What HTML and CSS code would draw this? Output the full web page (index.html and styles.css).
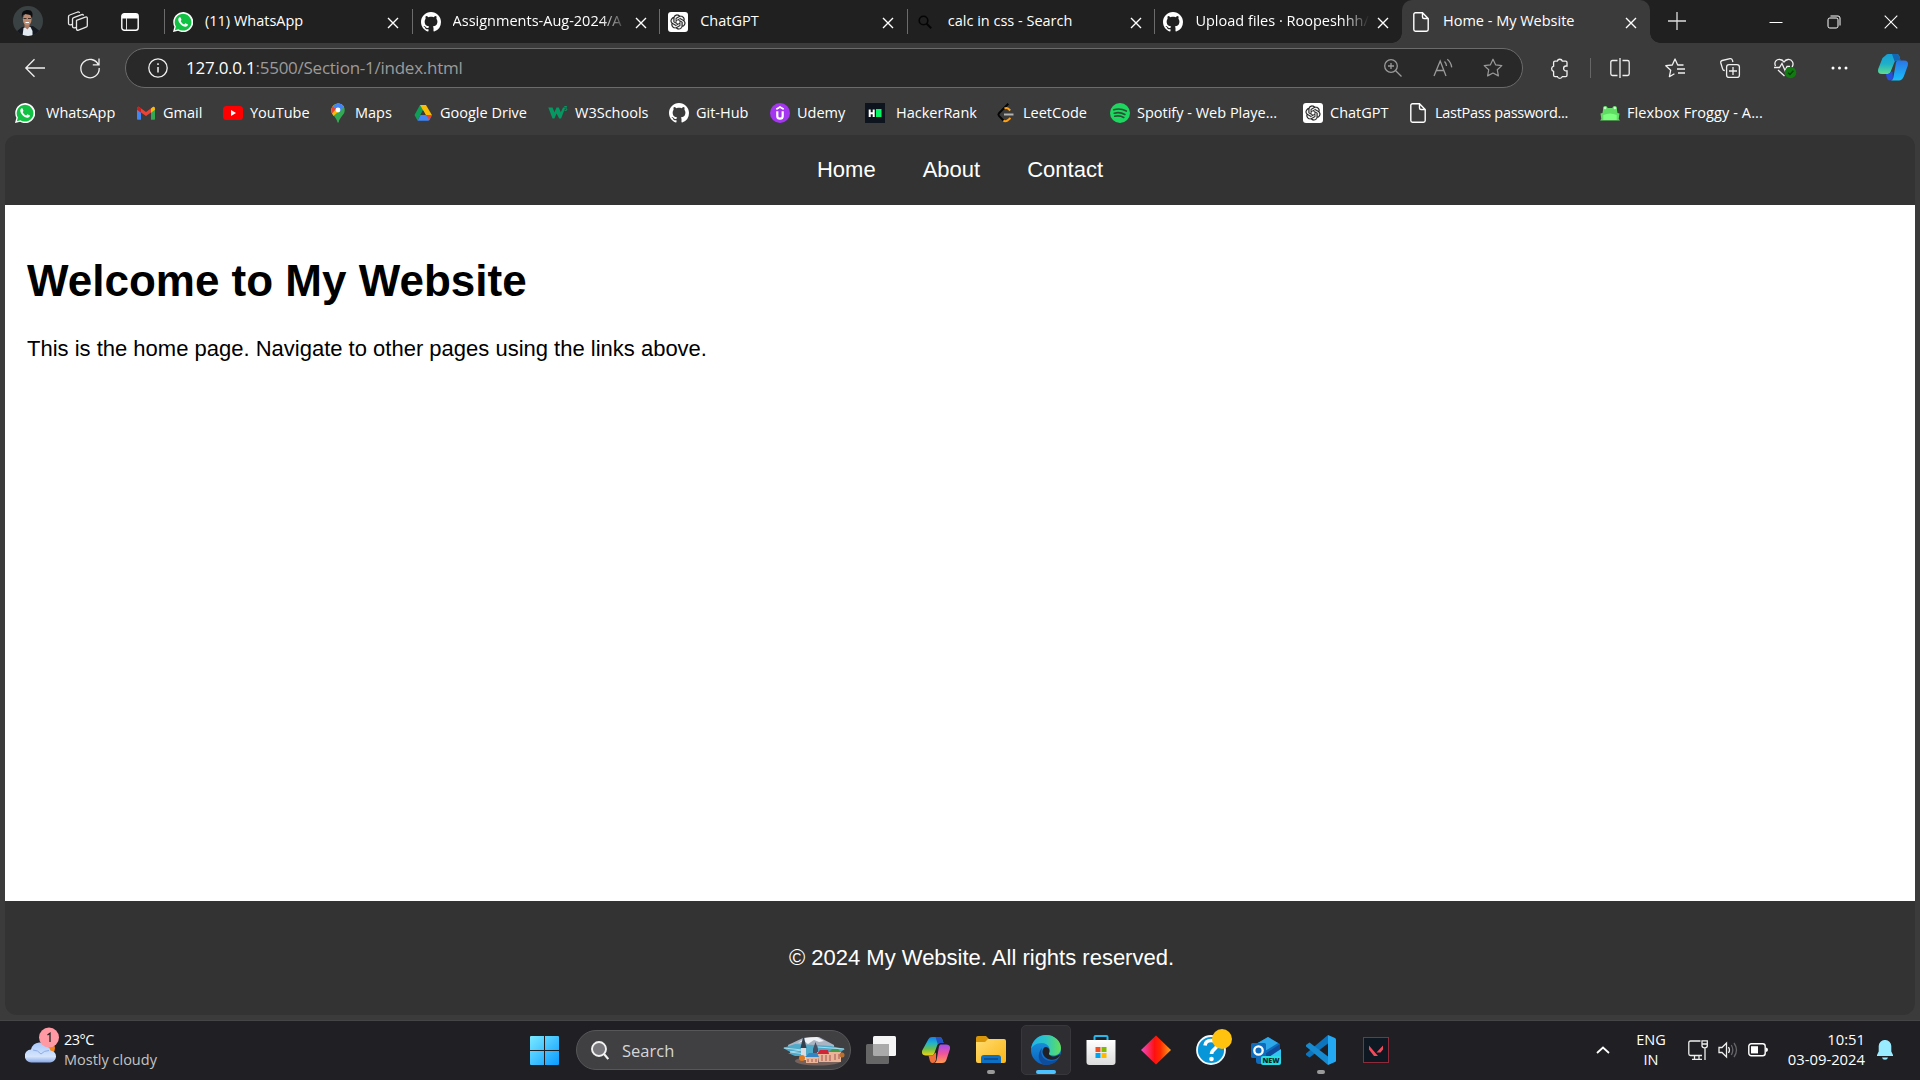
FILE: index.html
```html
<!DOCTYPE html>
<html lang="en">
<head>
<meta charset="utf-8">
<title>Home - My Website</title>
<link rel="stylesheet" href="styles.css">
</head>
<body>
<svg width="0" height="0" class="sprite" aria-hidden="true">
  <defs>
    <linearGradient id="g-win" x1="0" y1="0" x2="1" y2="1"><stop offset="0" stop-color="#7beaff"/><stop offset="1" stop-color="#0a9bff"/></linearGradient>
    <linearGradient id="g-folder" x1="0" y1="0" x2="1" y2="1"><stop offset="0" stop-color="#ffdc70"/><stop offset="1" stop-color="#fbb616"/></linearGradient>
    <linearGradient id="g-dia"><stop offset="0" stop-color="#f04cc8"/><stop offset=".45" stop-color="#ff1010"/><stop offset=".65" stop-color="#ff2b00"/><stop offset="1" stop-color="#ffa51e"/></linearGradient>
    <linearGradient id="g-edge1"><stop offset="0" stop-color="#1fb6ea"/><stop offset=".5" stop-color="#2cc5c4"/><stop offset="1" stop-color="#62e05a"/></linearGradient>
    <linearGradient id="g-edge2" x1="0" y1="0" x2="0" y2="1"><stop offset="0" stop-color="#1b9de2"/><stop offset="1" stop-color="#0b60bd"/></linearGradient>
    <linearGradient id="g-cp1" x1="0" y1="0" x2="0" y2="1"><stop offset="0" stop-color="#1580ee"/><stop offset=".35" stop-color="#24b5c9"/><stop offset=".65" stop-color="#6cc04a"/><stop offset="1" stop-color="#f2d313"/></linearGradient>
    <linearGradient id="g-cp2" x1="0" y1="0" x2="0" y2="1"><stop offset="0" stop-color="#a04df2"/><stop offset=".5" stop-color="#f0549c"/><stop offset="1" stop-color="#ff9a4b"/></linearGradient>
    <linearGradient id="g-ecp1" x1="0" y1="0" x2="0" y2="1"><stop offset="0" stop-color="#15a0d8"/><stop offset=".5" stop-color="#1fb0c8"/><stop offset="1" stop-color="#5edc8c"/></linearGradient>
    <linearGradient id="g-ecp2" x1="0" y1="0" x2="0" y2="1"><stop offset="0" stop-color="#2b74e8"/><stop offset="1" stop-color="#18c0f8"/></linearGradient>
    <linearGradient id="g-cloud" x1="0" y1="0" x2="0" y2="1"><stop offset="0" stop-color="#a9c9fb"/><stop offset=".7" stop-color="#d5e4fb"/><stop offset="1" stop-color="#86a8e8"/></linearGradient>
    <linearGradient id="g-store" x1="0" y1="0" x2="0" y2="1"><stop offset="0" stop-color="#fff"/><stop offset="1" stop-color="#dcdcdc"/></linearGradient>
    <symbol id="close" viewBox="0 0 12 12"><path d="M1 1l10 10M11 1L1 11" stroke="#fff" stroke-width="1.4"/></symbol>
    <symbol id="whatsapp" viewBox="0 0 20 20"><path d="M0 20l1.4-5.2A10 10 0 1 1 5.100 18.700z" fill="#fff"/><path d="M1.900 18.200l1-3.600A8.400 8.400 0 1 1 5.400 17.200z" fill="#12c143"/><path d="M6.800 5.200c-.8.200-1.500 1-1.500 2.200 0 3.100 3.800 7 7 7.300 1.400.1 2.500-.7 2.700-2.100l-2.600-1.300-1.200 1.200c-1.800-.7-2.900-1.900-3.600-3.500l.9-1.100-.9-2.500z" fill="#fff"/></symbol>
    <symbol id="github" viewBox="0 0 16 16"><path fill="#fff" d="M8 0C3.580 0 0 3.580 0 8c0 3.540 2.290 6.530 5.470 7.590.4.070.55-.17.55-.38 0-.19-.01-.82-.01-1.490-2.010.37-2.530-.49-2.690-.94-.09-.23-.48-.94-.82-1.130-.28-.15-.68-.52-.01-.53.63-.01 1.080.58 1.230.82.72 1.210 1.870.87 2.330.66.070-.52.28-.87.510-1.070-1.780-.2-3.640-.89-3.640-3.950 0-.87.310-1.590.82-2.150-.08-.2-.36-1.020.08-2.120 0 0 .67-.21 2.200.82.64-.18 1.320-.27 2-.27s1.360.09 2 .27c1.530-1.040 2.200-.82 2.200-.82.44 1.100.16 1.920.08 2.120.51.56.82 1.270.82 2.150 0 3.070-1.870 3.750-3.650 3.950.29.25.54.73.54 1.480 0 1.070-.01 1.930-.01 2.200 0 .21.150.46.55.38A8.010 8.010 0 0 0 16 8c0-4.420-3.580-8-8-8z"/></symbol>
    <symbol id="gpt" viewBox="0 0 20 20"><rect width="20" height="20" rx="3" fill="#fff"/><path transform="translate(2.500 2.500) scale(.625)" fill="#1c1c1c" stroke="#1c1c1c" stroke-width=".3" d="M22.2819 9.8211a5.9847 5.9847 0 0 0-.5157-4.9108 6.0462 6.0462 0 0 0-6.5098-2.9A6.0651 6.0651 0 0 0 4.9807 4.1818a5.9847 5.9847 0 0 0-3.9977 2.9 6.0462 6.0462 0 0 0 .7427 7.0966 5.98 5.98 0 0 0 .511 4.9107 6.051 6.051 0 0 0 6.5146 2.9001A5.9847 5.9847 0 0 0 13.2599 24a6.0557 6.0557 0 0 0 5.7718-4.2058 5.9894 5.9894 0 0 0 3.9977-2.9001 6.0557 6.0557 0 0 0-.7475-7.0729zm-9.022 12.6081a4.4755 4.4755 0 0 1-2.8764-1.0408l.1419-.0804 4.7783-2.7582a.7948.7948 0 0 0 .3927-.6813v-6.7369l2.02 1.1686a.071.071 0 0 1 .038.052v5.5826a4.504 4.504 0 0 1-4.4945 4.4944zm-9.6607-4.1254a4.4708 4.4708 0 0 1-.5346-3.0137l.142.0852 4.783 2.7582a.7712.7712 0 0 0 .7806 0l5.8428-3.3685v2.3324a.0804.0804 0 0 1-.0332.0615L9.74 19.9502a4.4992 4.4992 0 0 1-6.1408-1.6464zM2.3408 7.8956a4.485 4.485 0 0 1 2.3655-1.9728V11.6a.7664.7664 0 0 0 .3879.6765l5.8144 3.3543-2.0201 1.1685a.0757.0757 0 0 1-.071 0l-4.8303-2.7865A4.504 4.504 0 0 1 2.3408 7.872zm16.5963 3.8558L13.1038 8.364 15.1192 7.2a.0757.0757 0 0 1 .071 0l4.8303 2.7913a4.4944 4.4944 0 0 1-.6765 8.1042v-5.6772a.79.79 0 0 0-.407-.667zm2.0107-3.0231l-.142-.0852-4.7735-2.7818a.7759.7759 0 0 0-.7854 0L9.409 9.2297V6.8974a.0662.0662 0 0 1 .0284-.0615l4.8303-2.7866a4.4992 4.4992 0 0 1 6.6802 4.66zM8.3065 12.863l-2.02-1.1638a.0804.0804 0 0 1-.038-.0567V6.0742a4.4992 4.4992 0 0 1 7.3757-3.4537l-.142.0805L8.704 5.459a.7948.7948 0 0 0-.3927.6813zm1.0976-2.3654l2.602-1.4998 2.6069 1.4998v2.9994l-2.5974 1.4997-2.6067-1.4997z"/></symbol>
    <symbol id="file" viewBox="0 0 16 20"><path d="M2.500 .8h7L15.200 6.500v11a1.700 1.700 0 0 1-1.700 1.700h-11A1.700 1.700 0 0 1 .8 17.500v-15A1.700 1.700 0 0 1 2.500 .8zM9.500 .8v4.200a1.500 1.500 0 0 0 1.500 1.500h4.200" fill="none" stroke="#fff" stroke-width="1.400"/></symbol>
    <symbol id="star" viewBox="0 0 20 20"><path d="M10 1.200l2.600 5.600 6.200.8-4.500 4.200 1.100 6.100L10 15l-5.400 2.900 1.100-6.100L1.200 7.600l6.200-.8z" fill="none" stroke="currentColor" stroke-width="1.200" stroke-linejoin="round"/></symbol>
  </defs>
</svg>

<header class="tabstrip">
  <div class="profile">
    <svg width="30" height="30" viewBox="0 0 30 30"><defs><clipPath id="face"><circle cx="15" cy="15" r="15"/></clipPath></defs><g clip-path="url(#face)"><rect width="30" height="30" fill="#3b4244"/><path d="M3 30v-4l6-5 11-1 8 6v4z" fill="#151a22"/><path d="M9.500 30l1-8 2-1h5l2 4v5z" fill="#e3eaf2"/><path d="M11.500 16h5v5l-2 2.500-3-2.500z" fill="#a87760"/><ellipse cx="14.200" cy="13.500" rx="4.300" ry="6" fill="#bd8b70"/><path d="M9 12c-1-6 1.500-8 6-8 4 0 5.500 3 4 8l-1.500-3-5.500-1-2 1z" fill="#0c0d10"/><path d="M10.500 12.500h3m1.500 0h3" stroke="#40302a"/><path d="M12.500 16.500h3.500" stroke="#fff"/></g></svg>
  </div>
  <div class="strip-btn spaces"><svg width="22" height="22" viewBox="0 0 22 22" fill="none" stroke="#e8e8e8" stroke-width="1.300" stroke-linejoin="round"><path d="M9.500 9.300l8.800-3.200q2-.6 2 1.200v7.200q0 1.300-1.200 1.700l-7.600 2.900q-2 .6-2-1.200z"/><path d="M9 16.500l-1.500.3q-2 .3-2-1.500V8.300q0-1.300 1.200-1.700l8-3q1.500-.4 1.800 1"/><path d="M5 13.500l-1.500.3q-2 .3-2-1.500V5.700q0-1.300 1.200-1.700l8-3q1.500-.4 1.800 1"/></svg></div>
  <div class="strip-btn"><svg width="18" height="18" viewBox="0 0 18 18"><rect x=".8" y=".8" width="16.400" height="16.400" rx="2.500" fill="none" stroke="#fff" stroke-width="1.400"/><path d="M1 3q0-2 2-2h12q2 0 2 2v2.500H1z" fill="#fff"/><path d="M5.500 5v12" stroke="#ddd"/></svg></div>
  <div class="tab"><svg class="fav"><use href="#whatsapp"/></svg><span class="title">(11) WhatsApp</span><svg class="x"><use href="#close"/></svg></div>
  <div class="tab"><svg class="fav"><use href="#github"/></svg><span class="title fade">Assignments-Aug-2024/A</span><svg class="x"><use href="#close"/></svg></div>
  <div class="tab"><svg class="fav"><use href="#gpt"/></svg><span class="title">ChatGPT</span><svg class="x"><use href="#close"/></svg></div>
  <div class="tab"><svg class="fav" viewBox="0 0 20 20"><circle cx="7.500" cy="8.500" r="4.300" fill="none" stroke="#050505" stroke-width="1.600"/><path d="M10.700 11.700l4.500 4.500" stroke="#050505" stroke-width="2"/></svg><span class="title">calc in css - Search</span><svg class="x"><use href="#close"/></svg></div>
  <div class="tab"><svg class="fav"><use href="#github"/></svg><span class="title fade">Upload files · Roopeshhh/</span><svg class="x"><use href="#close"/></svg></div>
  <div class="tab active"><svg class="fav"><use href="#file"/></svg><span class="title">Home - My Website</span><svg class="x"><use href="#close"/></svg></div>
  <div class="newtab"><svg width="18" height="18" viewBox="0 0 18 18"><path d="M9 0v18M0 9h18" stroke="#ddd" stroke-width="1.300"/></svg></div>
  <div class="window-controls">
    <div><svg width="14" height="14" viewBox="0 0 14 14"><path d="M.5 7.500h13" stroke="#fff"/></svg></div>
    <div><svg width="14" height="14" viewBox="0 0 14 14" fill="none" stroke="#fff"><rect x="1" y="3" width="10" height="10" rx="1.800"/><path d="M3.500 1h7.500q2 0 2 2v7.500"/></svg></div>
    <div><svg width="14" height="14" viewBox="0 0 14 14"><path d="M.7 .7l12.600 12.600M13.300 .7L.7 13.300" stroke="#fff" stroke-width="1.100"/></svg></div>
  </div>
</header>

<div class="toolbar">
  <div class="tool"><svg width="20" height="20" viewBox="0 0 20 20"><path d="M20 10H1M9.500 1.200L.8 10l8.700 8.800"/></svg></div>
  <div class="tool"><svg width="20" height="20" viewBox="0 0 20 20"><path d="M18.500 7A9.200 9.200 0 1 0 19.200 10M19 .5V6.800h-6.200"/></svg></div>
  <div class="address">
    <svg class="info" width="20" height="20" viewBox="0 0 20 20"><circle cx="10" cy="10" r="9.200"/><path d="M10 9v5.500M10 5.200v1.700" stroke-width="1.500"/></svg>
    <div class="url"><span class="host">127.0.0.1</span>:5500/Section-1/index.html</div>
    <div class="addr-btn"><svg width="18" height="18" viewBox="0 0 18 18"><circle cx="7" cy="7" r="6.300"/><path d="M11.700 11.700l5.800 5.800M7 4v6M4 7h6"/></svg></div>
    <div class="addr-btn"><svg width="20" height="20" viewBox="0 0 20 20"><path d="M1 18L7.200 3 13 18M3.200 12.500h7.800M11.500 3.500q2 2 2 4.500M14.300 1.300q3.700 3 4.400 8"/></svg></div>
    <div class="addr-btn"><svg width="20" height="20"><use href="#star"/></svg></div>
  </div>
  <div class="tool first"><svg width="20" height="20" viewBox="0 0 20 20"><path d="M7 3.200h1.200a2.700 2.700 0 0 1 5.200 0h3.200q1.400 0 1.400 1.400V8h-1a2.400 2.400 0 0 0 0 4.800h1v4.400q0 1.400-1.400 1.400h-3.300a2.600 2.600 0 0 1-4.900 0H6q-1.400 0-1.400-1.400v-3.800a2.700 2.700 0 0 1 0-5.200V4.600q0-1.400 1.400-1.400z"/></svg></div>
  <div class="divider"></div>
  <div class="tool"><svg width="20" height="20" viewBox="0 0 20 20"><path d="M7.500 2.500H2.500q-1.700 0-1.700 1.700v11.600q0 1.700 1.700 1.700h5M12.500 2.500h5q1.700 0 1.700 1.700v11.600q0 1.700-1.700 1.700h-5M10 0v20"/></svg></div>
  <div class="tool"><svg width="20" height="20" viewBox="0 0 20 20"><path d="M18.500 7H12.700L10 1 7.300 7 .8 7.700l4.900 4.500-1.300 6.500 5-3M12 11h8M13 15h7" stroke-linejoin="round"/></svg></div>
  <div class="tool"><svg width="20" height="20" viewBox="0 0 20 20"><rect x="6.600" y="6.600" width="12.800" height="12.800" rx="2.500"/><path d="M13 9v8M9 13h8M4.800 12.500q-1.800 0-2.200-1.700L.8 5q-.4-2 1.400-2.500L10 .6q1.800-.3 2.400 1.500l.5 1.900"/></svg></div>
  <div class="tool"><svg width="22" height="20" viewBox="0 0 22 20"><path d="M1.500 8C-.5 3.500 3 1 6 1.500q2.500.3 4 2.500 1.500-2.200 4-2.500c4-.5 6.500 4 4 7.500M0 9.500h5.500L8 5.500l3 7 2-4h3M4 12l6.500 6"/><circle cx="16.500" cy="14.500" r="5.700" fill="#107c10" stroke="none"/><path d="M14 14.700l1.900 1.800 3.500-3.700" stroke="#073d09"/></svg></div>
  <div class="tool"><svg width="17" height="4" viewBox="0 0 17 4" class="dots"><circle cx="2" cy="2" r="1.500"/><circle cx="8.500" cy="2" r="1.500"/><circle cx="15" cy="2" r="1.500"/></svg></div>
  <div class="tool copilot"><svg width="30" height="27" viewBox="0 0 30 27"><path d="M7.500 1.500Q8.300 0 10 0h8.500q2 0 2.800 2.200l1.200 4.300H19q-2 0-2.700 2L12.500 18q-.8 2-3 2H4q-5 0-3.800-5L4.500 4z" fill="url(#g-ecp1)"/><path d="M14 0h4.500q2 0 2.800 2.200l1.200 4.300H19q-1.500 0-2.300 1.200z" fill="#1266b4"/><path d="M19.500 6.500H26q5 0 3.800 5l-4 11Q24 26.500 21 26.500h-8q1.700-.7 2.300-2.500L18 8.500q.5-1.500 1.500-2z" fill="url(#g-ecp2)"/><path d="M8 20h2q2 0 2.700-2l1.800-.5.500 7q-1 2-3 2-2.500 0-3.200-2.500z" fill="#254fdd"/></svg></div>
</div>

<nav class="bookmarks">
  <a><svg class="bi"><use href="#whatsapp"/></svg><span class="wide">WhatsApp</span></a>
  <a><svg class="bi" viewBox="0 0 20 20"><path d="M1 5v11.500h4V9.500L10 13l5-3.500v7h4V5l-1.500-1.500L10 9 2.500 3.500z" fill="#ea4335"/><path d="M1 6v9.500q0 1 1 1h3V9z" fill="#4285f4"/><path d="M15 9v7.500h3q1 0 1-1V6z" fill="#34a853"/><path d="M15 5.400l1.500-1.200Q19 3 19 6v.8l-4 3z" fill="#fbbc04"/><path d="M1 6.800V6q0-3 2.500-1.800L5 5.400v4.400z" fill="#c5221f"/></svg><span>Gmail</span></a>
  <a><svg class="bi" viewBox="0 0 20 20"><rect y="3" width="20" height="14" rx="3.500" fill="#f00"/><path d="M8 7l5 3-5 3z" fill="#fff"/></svg><span>YouTube</span></a>
  <a><svg class="bi" viewBox="0 0 20 20"><path d="M10 .5a6.500 6.500 0 0 1 6.700 6.700c0 5-5.200 6.500-6 12.300H9.500C8.600 13.700 3.300 12.200 3.300 7.200A6.500 6.500 0 0 1 10 .5z" fill="#34a853"/><path d="M5 3Q7 .5 10 .5q4 0 5.900 3.300L5.500 13Q3.300 10.500 3.300 7.200 3.300 5 5 3z" fill="#fbbc04"/><path d="M5 3l3 3-4 4.500Q2.500 6 5 3z" fill="#ea4335"/><path d="M5 3Q7 .5 10 .5q4 0 5.900 3.300l-4 4.500L7 5.500z" fill="#4285f4"/><circle cx="10" cy="7" r="2.400" fill="#fff"/></svg><span>Maps</span></a>
  <a><svg class="bi" viewBox="0 0 20 20"><path d="M7 2h6l-3 5.200-5.500 10.300L1.500 12z" fill="#0f9d58"/><path d="M7 2h6l6 10.200h-6z" fill="#fbbc04"/><path d="M4.500 17.800L7.500 12H19l-2.500 5q-.5.800-1.500.8z" fill="#4285f4"/><path d="M13 12h6l-2.800 5z" fill="#ea4335"/><path d="M10 7.500L7.500 12h5z" fill="#3b3b3b"/></svg><span>Google Drive</span></a>
  <a><svg class="bi" viewBox="0 0 20 20"><path d="M.3 4.500h4.200l2 4.700L8.500 4.500h2.300l2 4.700 2.200-4.700h2.300l-4.200 11h-1.900L8.600 10.500l-2.200 5H4.500z" fill="#059862"/><path d="M16.300 3.500h2.400l-1.200 1.800q1.800.2 1.300 1.700-.6 1-2.300.4" stroke="#059862" fill="none"/></svg><span>W3Schools</span></a>
  <a><svg class="bi"><use href="#github"/></svg><span>Git-Hub</span></a>
  <a><svg class="bi" viewBox="0 0 20 20"><circle cx="10" cy="10" r="10" fill="#a435f0"/><path d="M6.300 6.200L10 4l3.700 2.200" stroke="#fff" stroke-width="1.600" fill="none"/><path d="M7.300 8.200v5q0 2.500 2.700 2.500t2.700-2.500v-5" stroke="#fff" stroke-width="2.200" fill="none"/></svg><span>Udemy</span></a>
  <a><svg class="bi" viewBox="0 0 20 20"><rect width="20" height="20" fill="#0e141e"/><path d="M4.700 6.500v7.500M8.700 6.500v7.500M4.700 10.200h4" stroke="#fff" stroke-width="2"/><path d="M11 6h5.500v8H11z" fill="#05f567"/></svg><span class="wide">HackerRank</span></a>
  <a><svg class="bi" viewBox="0 0 20 20"><path d="M12.300 .8L3 10.300q-1.200 1.300 0 2.600L7.500 17.500" stroke="#050505" stroke-width="2" fill="none"/><path d="M8.500 5.500q2.500-1.500 4.700 1l1 1M7.500 17.500q1.500 1.300 4 0l3-2.500" stroke="#ffa116" stroke-width="2" fill="none"/><path d="M8 11.500h9.500" stroke="#b3b3b3" stroke-width="2"/></svg><span>LeetCode</span></a>
  <a><svg class="bi" viewBox="0 0 20 20"><circle cx="10" cy="10" r="10" fill="#1ed760"/><path d="M3.800 6.700q6.500-1.900 12.500 1.400M4.300 10.200q5.600-1.500 10.600 1.300M4.800 13.200q4.700-1.200 9 1.200" stroke="#2b5135" stroke-width="1.700" fill="none" stroke-linecap="round"/></svg><span>Spotify - Web Playe...</span></a>
  <a><svg class="bi"><use href="#gpt"/></svg><span>ChatGPT</span></a>
  <a><svg class="bi"><use href="#file"/></svg><span class="tight">LastPass password...</span></a>
  <a><svg class="bi" viewBox="0 0 20 20"><path d="M3 7q-.5-4 2.300-4 2 0 2.400 2h4.600q.4-2 2.400-2Q17.500 3 17 7l.5 3 2 .5-.8 5.500 1.300 1.500H0L1.300 16 .5 10.500l2-.5z" fill="#60dc65"/><path d="M3.300 12q6.700-3 13.400 0v5H3.300z" fill="#7cff7f"/><circle cx="5.200" cy="5" r="1.200" fill="#d8ffd8"/><circle cx="14.800" cy="5" r="1.200" fill="#d8ffd8"/></svg><span class="airy">Flexbox Froggy - A...</span></a>
</nav>

<main class="viewport">
  <nav class="site-nav"><a>Home</a><a>About</a><a>Contact</a></nav>
  <section class="content">
    <h1>Welcome to My Website</h1>
    <p>This is the home page. Navigate to other pages using the links above.</p>
  </section>
  <footer class="site-footer"><p>© 2024 My Website. All rights reserved.</p></footer>
</main>

<footer class="taskbar">
  <div class="weather">
    <svg width="36" height="38" viewBox="0 0 36 38"><circle cx="23" cy="21" r="7" fill="#f58418"/><path d="M6.500 35.500a6.500 6.500 0 0 1-.5-13A9.500 9.500 0 0 1 23.500 20.500q1 0 2 3a6 6 0 0 1-1 12z" fill="url(#g-cloud)"/><path d="M8 23q5 0 8 4 3-3.500 8-3.500" stroke="#7f9fe0" stroke-width=".8" fill="none"/><circle cx="24" cy="10.500" r="10" fill="#ff99a4"/><path d="M22.500 8l2.500-1.800V15" stroke="#222" stroke-width="1.300" fill="none"/></svg>
    <div class="weather-text"><span class="temp">23°C</span><span class="sky">Mostly cloudy</span></div>
  </div>
  <div class="start"><svg width="29" height="29" viewBox="0 0 29 29"><path fill="url(#g-win)" d="M1 0h13v14H0V1q0-1 1-1zM15 0h13q1 0 1 1v13H15zM0 15h14v14H1q-1 0-1-1zM15 15h14v13q0 1-1 1H15z"/></svg></div>
  <div class="search">
    <svg width="18" height="19" viewBox="0 0 18 19"><circle cx="8" cy="8" r="7" fill="#77777c" stroke="#f2f2f2" stroke-width="1.900"/><path d="M13 13l4.300 5" stroke="#f2f2f2" stroke-width="2.200"/></svg>
    <span>Search</span>
    <svg width="62" height="31" viewBox="0 0 62 31"><path d="M5 10L20 3l8-1 8 0 15 8v5H6z" fill="#aab4c2"/><path d="M15 8l7-5 12-1 7 4-5 1-5-2-6 4-4-3z" fill="#eef1f6"/><path d="M0 13l12-4 20 1 16 1 14 3-3 2-5 5H12L5 18h4z" fill="#4fa9c9"/><path d="M1 13l18 2-12 2 16 2M35 12l26 2" fill="none" stroke="#a9dceb"/><ellipse cx="35" cy="26" rx="23" ry="4.500" fill="#76615c"/><path d="M18 13h5v12h-5z" fill="#dbdbe0"/><path d="M17.500 13L20.500 0l3 13z" fill="#35404f"/><path d="M30 14l2.500-7 2.500 7v5h-5z" fill="#435066"/><path d="M23 20h12v8H23zM34 17h24v10H36z" fill="#eab596"/><path d="M22 22l4-4h8l2 4z" fill="#3284c3"/><path d="M34 19l3-4h8l1 4z" fill="#ce2638"/><path d="M46 17l3-3h6l3 3z" fill="#429b49"/><path d="M25 24v3M29 24v3M33 24v3M39 20v6M43 20v6M47 20v6M52 19v6M56 19v5" stroke="#a65258"/><circle cx="19" cy="23" r="3" fill="#dc7b22"/><circle cx="59" cy="20" r="2.500" fill="#b9702f"/></svg>
  </div>
  <div class="app"><svg width="30" height="28" viewBox="0 0 30 28"><rect x="7" width="23" height="20" rx="1.500" fill="#f5f5f5"/><rect y="8" width="23" height="20" rx="1.500" fill="#666"/><path d="M7 8h16v12H8.500Q7 20 7 18.500z" fill="#aaa"/></svg></div>
  <div class="app"><svg width="28" height="26" viewBox="0 0 28 26"><path d="M6.500 2Q7.500 0 10 0h7.500q2 0 2.700 2.200L21.500 6H18q-2 0-2.700 2l-3 8.500q-.8 2-3 2H4q-5 0-3.800-5z" fill="url(#g-cp1)"/><path d="M13.500 0h4q2 0 2.700 2.200L21.500 6H18q-1.500 0-2.200 1.200z" fill="#2453c8"/><path d="M18.500 7.500H24q5 0 3.800 5l-3.300 10q-1 3.500-4.500 3.500h-8q2-.5 2.500-2.500L17 9.500q.5-1.500 1.500-2z" fill="url(#g-cp2)"/><path d="M6.500 18.500h3q2 0 3-2l1.500-1v7q-.7 3.500-3.500 3.500-2 0-2.600-2.300z" fill="#f0703c"/></svg></div>
  <div class="app run"><svg width="30" height="28" viewBox="0 0 30 28"><path d="M0 2q0-2 2-2h8l3 3-2 5H0z" fill="#d99509"/><path d="M0 6h9l3-3h16q2 0 2 2v20q0 2-2 2H2q-2 0-2-2z" fill="url(#g-folder)"/><path d="M5 27v-5q0-3 3-3h14q3 0 3 3v5z" fill="#0d70c2"/><path d="M8 23h14" stroke="#08498c" stroke-width="1.500"/></svg></div>
  <div class="app current"><svg width="30" height="30" viewBox="0 0 30 30"><circle cx="15" cy="15" r="15" fill="url(#g-edge2)"/><path d="M0 14.500C1 5 8 0 15 0c9 0 15 6.500 15 13 0 5-3.500 7.500-7.500 7.500-3 0-5-1-4.500-2.300C20 15.500 18.500 8 10.500 8 5 8 1 11 0 14.500z" fill="url(#g-edge1)"/><path d="M11 13c-2.500 7 2 13 9 13 3 0 5.500-.8 7-1.900C24 28.500 20 30 15 30c-7-1-10-10-4-17z" fill="#104c9c"/><path d="M14.500 12c3 0 4.500 2.500 3.800 5-.5 2-.5 2.500.5 3.200 3 2.500 7.700 1 9.700-1.200.5 1 .5 1.500 0 2-2.500 3.500-6 4-8.500 3.700-5.500-.6-8.500-4.500-8.500-7.900 0-2.500 1.200-4.300 3-4.800z" fill="#202026"/></svg></div>
  <div class="app"><svg width="30" height="30" viewBox="0 0 30 30"><path d="M8.500 6V2q0-1 1-1h11q1 0 1 1v4" fill="none" stroke="#29b6ea" stroke-width="2"/><path d="M.5 5h29v22q0 3-3 3h-23q-3 0-3-3z" fill="url(#g-store)"/><path d="M9.500 12h5v5h-5z" fill="#f25022"/><path d="M15.500 12h5v5h-5z" fill="#7fba00"/><path d="M9.500 18h5v5h-5z" fill="#00a4ef"/><path d="M15.500 18h5v5h-5z" fill="#ffb900"/></svg></div>
  <div class="app"><svg width="30" height="30" viewBox="0 0 30 30"><path d="M15 .5L30 15 15 29.500 0 15z" fill="url(#g-dia)"/></svg></div>
  <div class="app"><svg width="30" height="30" viewBox="0 0 30 30" class="spill"><circle cx="15" cy="15" r="14" fill="#0896d8" stroke="#f4fafd" stroke-width="1.800"/><path d="M9 10.500q.5-5 6-5t6 4.500c0 4-5.500 4.200-5.500 9" stroke="#fff" stroke-width="3.600" fill="none"/><circle cx="15.500" cy="24" r="2.300" fill="#fff"/><circle cx="26" cy="4" r="10" fill="#ffc20e"/></svg></div>
  <div class="app"><svg width="30" height="30" viewBox="0 0 30 30"><path d="M5 9L17 2l12 7v17q0 3-3 3H8q-3 0-3-3z" fill="#0f6cbd"/><path d="M5 9L17 2l10 6-13 8H5z" fill="#2ea8e8"/><path d="M14 19L29 9v16H14z" fill="#104a9c"/><path d="M18 22l12-8v14H18z" fill="#34c4f1"/><rect y="8" width="15" height="15" rx="1.500" fill="#0f6cbd"/><circle cx="7.500" cy="15.500" r="4.200" fill="none" stroke="#fff" stroke-width="2.300"/><rect x="10" y="21" width="20" height="9" rx="2" fill="#27dce5"/><text x="20" y="28.300" text-anchor="middle" class="new">NEW</text></svg></div>
  <div class="app run"><svg width="30" height="30" viewBox="0 0 30 30"><path d="M22 0l7 3q1 .5 1 1.500v21q0 1-1 1.500l-7 3z" fill="#24a8f2"/><path d="M22 0v8.500L3.500 22.500 0 20v-1.500z" fill="#0d75bd"/><path d="M3.500 7.500L22 21.500V30L0 11.500V10z" fill="#168bd2"/></svg></div>
  <div class="app"><svg width="26" height="26" viewBox="0 0 26 26"><rect x=".5" y=".5" width="25" height="25" fill="#0d1823" stroke="#8d2b3a"/><path d="M6 8.500l9 10.500h-4L6 12.500zM20 8.500v4l-2.500 3H13.500z" fill="#f24a5b"/></svg></div>
  <div class="tray">
    <svg class="chev" width="14" height="8" viewBox="0 0 14 8"><path d="M1 7l6-5.500L13 7" fill="none" stroke="#fff" stroke-width="1.800"/></svg>
    <div class="lang"><span>ENG</span><span>IN</span></div>
    <svg class="net" width="20" height="20" viewBox="0 0 20 20" fill="none" stroke="#eee" stroke-width="1.300"><path d="M12.500 1H2.500Q.8 1 .8 2.700v11Q.8 15.500 2.500 15.500H14M6.500 16v3M11 16v3M4 19.300h10M17 8v12M14 .8h5.300v5q0 2-2.600 2t-2.700-2zM14 4h5"/></svg>
    <svg class="vol" width="20" height="18" viewBox="0 0 20 18" fill="none" stroke="#eee" stroke-width="1.300"><path d="M1 6.500h3L8.500 2v14L4 11.500H1zM10.500 6q2 3 0 6"/><path d="M13.300 4q3 5 0 10M16 2q5 7 0 14" stroke="#66666a"/></svg>
    <svg class="bat" width="20" height="14" viewBox="0 0 20 14"><rect x=".8" y=".8" width="16.400" height="12" rx="2.500" fill="none" stroke="#fff" stroke-width="1.400"/><path d="M3 3.200h7v7.200H3z" fill="#fff"/><path d="M18 4.500q2 .5 2 2.300t-2 2.300z" fill="#fff"/></svg>
    <div class="clock"><span>10:51</span><span>03-09-2024</span></div>
    <svg class="bell" width="16" height="20" viewBox="0 0 16 20"><path d="M8 0a6 6 0 0 1 6.300 6v5.500L16 15v1H0v-1l1.700-3.500V6A6 6 0 0 1 8 0zM5 17.500h6Q10.500 19.800 8 19.800T5 17.500z" fill="#99ebff"/></svg>
  </div>
</footer>
</body>
</html>
```
FILE: styles.css
```css
* { box-sizing: border-box; }
body {
  margin: 0; width: 1920px; height: 1080px; overflow: hidden;
  display: flex; flex-direction: column;
  background: #3b3b3b; color: #fff;
  font: 14.5px "Open Sans", "Noto Sans", sans-serif;
}
svg { display: block; flex: none; }
.sprite { position: absolute; }
span { white-space: nowrap; }

.tabstrip { display: flex; height: 43px; background: #202020; flex: none; }
.profile { width: 55px; padding: 6px 0 0 13px; }
.strip-btn { width: 53px; display: flex; align-items: center; justify-content: center; }
.strip-btn.spaces { width: 46px; }
.strip-btn + .strip-btn { width: 63px; padding-right: 5px; }
.tab { width: 247.6px; display: flex; align-items: center; padding-left: 8px; position: relative; }
.tab::before { content: ""; width: 1px; height: 25px; background: #6c6c6c; margin-left: -8px; margin-right: 8px; }
.fav { width: 20px; height: 20px; margin-top: 1px; }
.title { width: 176px; margin-left: 12px; line-height: 22px; margin-bottom: 1px; }
.fade {
  -webkit-mask-image: linear-gradient(90deg, #000 84%, transparent 99%);
  mask-image: linear-gradient(90deg, #000 84%, transparent 99%);
}
.x { width: 12px; height: 12px; margin-left: 6px; margin-top: 2px; }
.active { background: #3b3b3b; border-radius: 10px 10px 0 0; }
.active::before { visibility: hidden; }
.active::after {
  content: ""; position: absolute; left: -10px; right: -10px; bottom: 0; height: 10px;
  background: radial-gradient(circle at 0 0, transparent 9.5px, #3b3b3b 10px) left / 10px 10px no-repeat,
              radial-gradient(circle at 100% 0, transparent 9.5px, #3b3b3b 10px) right / 10px 10px no-repeat;
}
.newtab { width: 54px; display: flex; align-items: center; justify-content: center; padding-bottom: 2px; }
.window-controls { margin-left: auto; display: flex; }
.window-controls div { width: 57.5px; display: flex; align-items: center; justify-content: center; }

.toolbar { height: 50px; flex: none; display: flex; align-items: center; padding-left: 7.5px; }
.tool { width: 55px; display: flex; justify-content: center; padding-bottom: 1px; }
.tool svg, .address svg { fill: none; stroke: #f0f0f0; stroke-width: 1.3; overflow: visible; }
.tool .dots { fill: #fff; stroke: none; }
.copilot svg { stroke: none; }
.address {
  width: 1398px; height: 40px; margin-left: 7.5px; padding: 0 4px 0 22px;
  border: 1px solid #6b6b6b; border-radius: 20px; background: #292929;
  display: flex; align-items: center;
}
.url { flex: 1; margin-left: 18px; color: #9b9b9b; font-size: 17px; letter-spacing: -0.25px; line-height: 24px; }
.host { color: #fff; }
.addr-btn { width: 50px; display: flex; justify-content: center; }
.address .addr-btn svg { stroke: #9a9a9a; color: #9a9a9a; }
.first { margin-left: 8.5px; }
.divider { width: 1.5px; height: 20px; background: #666; margin: 0 1px 0 3px; }
.copilot { width: 52px; }

.bookmarks {
  height: 42px; flex: none; padding-left: 15px; padding-bottom: 2px;
  display: grid; align-items: center;
  grid-template-columns: 121px 87px 105px 85px 135px 121px 101px 95px 131px 114px 193px 105px 192px 200px;
}
.bookmarks a { display: flex; align-items: center; gap: 7px; }
.bookmarks span { line-height: 22px; }
.bi { width: 20px; height: 20px; }
.bookmarks .wide { margin-left: 4px; }
.bookmarks .tight { letter-spacing: -0.3px; }
.bookmarks .airy { letter-spacing: 0.1px; }

.viewport {
  height: 880px; flex: none; margin: 0 5px; overflow: hidden; border-radius: 12px;
  display: flex; flex-direction: column;
  background: #333; color: #fff;
  font: 22px "Liberation Sans", Arial, sans-serif;
}
.site-nav { height: 70px; display: flex; justify-content: center; gap: 47px; line-height: 25px; padding-top: 22px; }
.content { flex: 1; padding: 0 22px; background: #fff; color: #000; }
h1 { margin: 51px 0 0; font-size: 44px; line-height: 50px; }
.content p { margin: 30px 0 0; line-height: 25px; }
.site-footer { height: 114px; text-align: center; padding-left: 43px; }
.site-footer p { margin: 44px 0 0; line-height: 25px; }

.taskbar {
  height: 60px; flex: none; margin-top: 5px; padding-bottom: 1px;
  display: flex; align-items: center;
  background: #202024; border-top: 1px solid #454547;
}
.weather { width: 530px; padding-left: 25px; display: flex; gap: 3px; }
.weather > svg { margin-top: -3px; }
.weather-text { display: flex; flex-direction: column; line-height: 20px; }
.temp { letter-spacing: -0.5px; }
.start { width: 46px; }
.sky { color: #c4c4c4; }
.search {
  width: 275px; height: 40px; padding: 0 5px 0 14px; margin-right: 2.5px;
  display: flex; align-items: center;
  border: 1px solid #57575a; border-radius: 20px; background: #404043;
}
.search span { flex: 1; margin-left: 13px; font-size: 16.5px; color: #d6d6d6; }
.app { position: relative; width: 55px; height: 50px; display: flex; align-items: center; justify-content: center; }
.spill { overflow: visible; }
.current::before { content: ""; position: absolute; inset: 0 2.5px; border-radius: 5px; border: 1px solid #38383c; background: #2e2e32; }
.current svg { position: relative; }
.run::after, .current::after { content: ""; position: absolute; bottom: 1px; left: 23.5px; width: 8px; height: 4px; border-radius: 2px; background: #9a9a9a; }
.current::after { left: 17.5px; width: 20px; background: #4cc2ff; }
.new { font: 800 7px "Open Sans", sans-serif; fill: #06262b; }
.tray { margin-left: auto; padding-right: 27px; display: flex; align-items: center; }
.lang { width: 50px; margin-left: 16px; display: flex; flex-direction: column; align-items: center; line-height: 20px; }
.net { margin-left: 12px; }
.vol, .bat { margin-left: 10px; }
.clock { width: 87px; margin: -2px 12px 0 10px; display: flex; flex-direction: column; align-items: flex-end; line-height: 20px; font-size: 14.8px; }
```
